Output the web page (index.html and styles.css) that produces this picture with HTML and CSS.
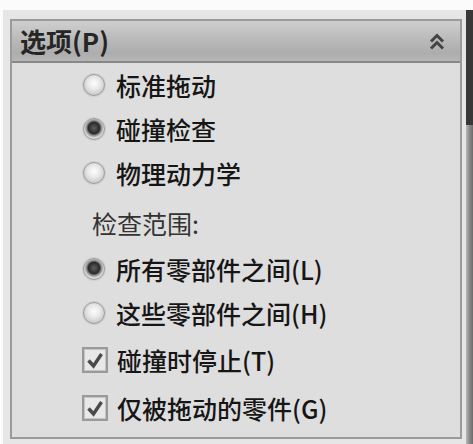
FILE: index.html
```html
<!DOCTYPE html>
<html lang="zh-CN">
<head>
<meta charset="utf-8">
<link rel="stylesheet" href="styles.css">
</head>
<body>
<div class="frame">
  <div class="outer">
    <div class="group">
      <div class="header">
        <span class="title">选项(P)</span>
        <svg class="chev" width="18" height="17" viewBox="0 0 18 17">
          <polyline points="3,8.5 9,2.5 15,8.5" fill="none" stroke="#444" stroke-width="3"/>
          <polyline points="3,15.5 9,9.5 15,15.5" fill="none" stroke="#444" stroke-width="3"/>
        </svg>
      </div>
      <div class="body">
        <div class="row"><span class="radio"></span><span class="txt">标准拖动</span></div>
        <div class="row"><span class="radio on"></span><span class="txt">碰撞检查</span></div>
        <div class="row"><span class="radio"></span><span class="txt">物理动力学</span></div>
        <div class="row label">检查范围:</div>
        <div class="row r5"><span class="radio on"></span><span class="txt">所有零部件之间(L)</span></div>
        <div class="row"><span class="radio"></span><span class="txt">这些零部件之间(H)</span></div>
        <div class="row r7"><span class="check"><svg width="18" height="17" viewBox="0 0 18 17"><polyline points="2.5,8.5 7.5,14 15.5,2" fill="none" stroke="#4a4a4a" stroke-width="3.4"/></svg></span><span class="txt">碰撞时停止(T)</span></div>
        <div class="row r8"><span class="check"><svg width="18" height="17" viewBox="0 0 18 17"><polyline points="2.5,8.5 7.5,14 15.5,2" fill="none" stroke="#4a4a4a" stroke-width="3.4"/></svg></span><span class="txt">仅被拖动的零件(G)</span></div>
      </div>
    </div>
  </div>
  <div class="scroll"><div class="thumb"></div></div>
</div>
</body>
</html>
```
FILE: styles.css
```css
html, body {
  margin: 0;
  padding: 0;
  background: #fbfbfb;
  height: 444px;
  overflow: hidden;
}
.frame {
  display: flex;
  margin-top: 10px;
  padding-left: 3px;
  height: 434px;
}
.outer {
  flex: 1;
  background: #e6e6e6;
  padding: 9px 4px 5px 7px;
}
.group {
  height: 416px;
  border: 2px solid #9a9a9a;
  background: #dedede;
  font-family: "Noto Sans CJK SC", "Noto Sans", sans-serif;
  color: #161616;
}
.header {
  height: 40px;
  border-bottom: 2px solid #888888;
  background: linear-gradient(#cfcfcf 0%, #bababa 45%, #adadad 80%, #b6b6b6 100%);
  display: flex;
  align-items: center;
  justify-content: space-between;
  padding: 0 14px 0 8px;
}
.title {
  font-size: 26px;
  font-weight: 700;
  color: #262626;
  line-height: 1;
}
.chev { display: block; }
.body {
  display: flex;
  flex-direction: column;
}
.row {
  height: 44px;
  display: flex;
  align-items: center;
  padding-left: 71px;
  font-size: 25px;
  font-weight: 500;
}
.txt { line-height: 1; margin-left: 11px; }
.label {
  margin-top: 6px;
  padding-left: 80px;
  color: #333333;
  font-weight: 400;
}
.r5 { margin-top: 2px; }
.r7 { margin-top: 3px; }
.r8 { margin-top: 4px; }
.radio {
  width: 20px;
  height: 20px;
  border-radius: 50%;
  border: 1px solid #9c9c9c;
  background: radial-gradient(circle at 50% 42%, #fdfdfd 0%, #e8e8e8 40%, #c4c4c4 80%, #b0b0b0 100%);
  box-shadow: 0 0 0 1px #cfcfcf;
  flex: none;
}
.radio.on {
  background: radial-gradient(circle at 50% 45%, #606060 0%, #2a2a2a 38%, #8c8c8c 50%, #dcdcdc 66%, #b6b6b6 100%);
}
.check {
  width: 22px;
  height: 22px;
  border: 2px solid #999;
  background: #e8e8e8;
  box-shadow: inset 0 0 0 1px #c4c4c4;
  display: flex;
  align-items: center;
  justify-content: center;
  margin-left: -1px;
  flex: none;
}
.check svg { display: block; }
.check + .txt { margin-left: 9px; }
.scroll {
  width: 7px;
  background: linear-gradient(90deg, #b8b8b8, #8a8a8a 50%, #6a6a6a);
}
.thumb {
  height: 115px;
  background: #383838;
}
```
